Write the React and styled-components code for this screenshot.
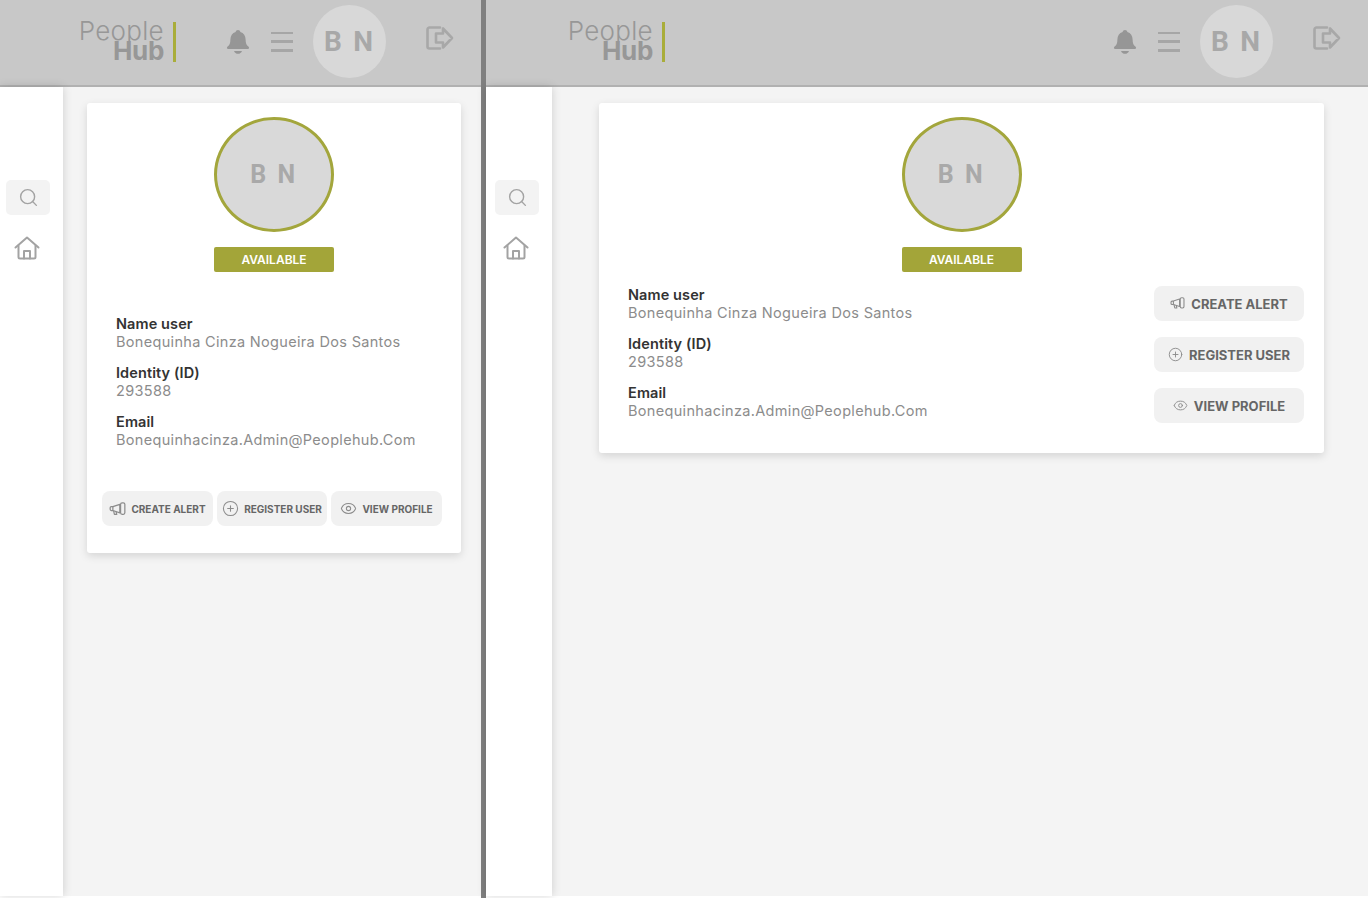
import React from "react";
import styled, { createGlobalStyle } from "styled-components";
import { Search, CirclePlus, Eye } from "lucide-react";

const Global = createGlobalStyle`
  html, body { margin: 0; padding: 0; background: #fff; height: 100%; overflow: hidden; }
  * { box-sizing: border-box; }
  body { font-family: Inter, "Liberation Sans", sans-serif; }
`;

const Page = styled.div`display: flex; width: 1368px; height: 898px; background: #fff;`;
const Divider = styled.div`width: 5px; height: 898px; background: #808080; flex: none;`;
const Pane = styled.div`
  width: ${p => p.$w}px; height: 896px; flex: none; display: flex; flex-direction: column;
`;
const Header = styled.header`
  height: 87px; flex: none; display: flex; align-items: center; background: #c8c8c8;
  border-bottom: 2px solid #b1b1b1; padding: 0 28px 2px ${p => p.$logo}px; justify-content: space-between;
`;
const Logo = styled.div`display: flex; align-items: stretch; gap: 9px; height: 40px; margin-top: 0;`;
const LogoText = styled.div`
  display: flex; flex-direction: column; align-items: flex-end; color: #979797;
  font-size: 26px; line-height: 20px; width: 91px;
`;
const LogoLight = styled.span`font-weight: 300; letter-spacing: .3px; white-space: nowrap; margin-top: -1px;`;
const LogoBold = styled.span`font-weight: 700; letter-spacing: -.3px;`;
const LogoBar = styled.span`width: 3px; background: #a9ad3a;`;
const Actions = styled.div`display: flex; align-items: center; width: 227px;`;
const Bell = styled.svg`width: 24px; height: 26px; fill: #969696; margin-right: 21px; flex: none;`;
const Burger = styled.div`
  width: 22px; height: 20px; flex: none; margin-right: 20px; display: flex; flex-direction: column; justify-content: space-between;
  span { height: 2.5px; background: #a6a6a6; display: block; }
`;
const HeadAvatar = styled.div`
  width: 73px; height: 73px; border-radius: 50%; background: #d8d8d8; color: #a8a8a8; flex: none;
  display: flex; align-items: center; justify-content: center;
  font: 700 28px Roboto, sans-serif; letter-spacing: 2.2px;
`;
const Logout = styled.svg`
  width: 30px; height: 26px; margin-left: 39px; flex: none; fill: none; stroke: #a8a8a8; stroke-width: 2.6;
  stroke-linecap: round; stroke-linejoin: round; margin-top: -7px;
`;
const Body = styled.div`flex: 1; display: flex; min-height: 0;`;
const Side = styled.aside`
  width: ${p => p.$w}px; flex: none; background: #fff; position: relative; z-index: 1;
  box-shadow: 0 0 9px rgba(0,0,0,.16); display: flex; flex-direction: column; padding: 93px 0 0 ${p => p.$x}px;
`;
const SearchBox = styled.div`
  width: 44px; height: 35px; border-radius: 5px; background: #f3f3f3; color: #a3a3a3;
  display: flex; align-items: center; justify-content: center;
`;
const HomeIcon = styled.svg`
  width: 26px; height: 24px; margin: 21px 0 0 ${p => p.$x}px; fill: none; stroke: #a3a3a3; stroke-width: 2;
  stroke-linejoin: round; stroke-linecap: round;
`;
const Main = styled.main`
  flex: 1; background: #f4f4f4; padding: 16px ${p => p.$r}px 0 ${p => p.$l}px;
`;
const Card = styled.section`
  background: #fff; border-radius: 3px; box-shadow: 0 3px 8px rgba(0,0,0,.13); height: ${p => p.$h}px;
  padding-top: 14px; display: flex; flex-direction: column;
`;
const Ring = styled.div`
  width: 120px; height: 115px; border-radius: 50%; border: 3px solid #a3a63c; background: #d9d9d9; align-self: center;
  display: flex; align-items: center; justify-content: center; color: #a9a9a9; flex: none;
  font: 700 25px Roboto, sans-serif; letter-spacing: 2.6px;
`;
const Badge = styled.div`
  width: 120px; height: 25px; margin-top: 15px; align-self: center; background: #a3a539; border-radius: 2px; color: #fff; flex: none;
  display: flex; align-items: center; justify-content: center; font-size: 12px; font-weight: 600;
`;
const Info = styled.div`display: flex; flex-direction: column; gap: 13px;`;
const Field = styled.div`display: flex; flex-direction: column;`;
const Label = styled.div`font-size: 14.5px; line-height: 18px; font-weight: 600; color: #333; letter-spacing: .1px;`;
const Value = styled.div`font-size: 14.5px; line-height: 18px; color: #8c8c8c; letter-spacing: .32px; white-space: nowrap;`;
const StackedInfo = styled(Info)`margin: 43px 0 0 29px;`;
const ButtonRow = styled.div`display: flex; gap: 4px; margin: 42px 0 0 15px;`;
const WideRow = styled.div`display: flex; justify-content: space-between; padding: 14px 20px 0 29px;`;
const ButtonCol = styled.div`display: flex; flex-direction: column; gap: 16px; margin-top: 0;`;
const WideInfo = styled(Info)`margin-top: 0;`;
const Btn = styled.button`
  width: ${p => p.$w}px; height: 35px; border: 0; border-radius: 8px; background: #f1f1f1; color: #666;
  font-family: inherit; font-weight: 700; font-size: ${p => p.$fs}px; white-space: nowrap; padding: 0;
  display: flex; align-items: center; justify-content: center; gap: ${p => p.$gap}px;
  svg { flex: none; color: #8c8c8c; }
`;

const BellIcon = () => (
  <Bell viewBox="0 0 24 26">
    <path d="M12 1c1.3 0 2.2.8 2.4 2 3.3 1 5.2 3.9 5.2 7.5 0 3.8.8 5.7 3 7.2.9.7.5 2.3-.8 2.3H2.2c-1.3 0-1.700-1.600-.8-2.300 2.200-1.500 3-3.400 3-7.200 0-3.600 1.900-6.500 5.200-7.500.2-1.200 1.100-2 2.400-2z" />
    <path d="M8 22h8c-.6 1.900-2.200 2.800-4 2.800S8.600 23.900 8 22z" />
  </Bell>
);

const LogoutIcon = () => (
  <Logout viewBox="0 0 30 26">
    <path d="M15 2.500H4.500a2 2 0 0 0-2 2v17a2 2 0 0 0 2 2H15" />
    <path d="M15 8.500h-4v9h7v5l9-9.500-9-9.500v5z" />
  </Logout>
);

const Megaphone = ({ s }) => (
  <svg width={s} height={s * 0.82} viewBox="0 0 22 18" fill="none" stroke="currentColor" strokeWidth="1.600" strokeLinejoin="round">
    <path d="M14 3 5 6H3a1.500 1.500 0 0 0-1.500 1.500v2A1.500 1.500 0 0 0 3 11h2l9 3z" />
    <path d="M5 6v5M6 11.400 7 16h3l-.8-3.500" />
    <rect x="15" y="1" width="5.500" height="15" rx="2" />
  </svg>
);

const Top = () => (
  <>
    <Ring>B N</Ring>
    <Badge>AVAILABLE</Badge>
  </>
);

const Fields = () => (
  <>
    <Field><Label>Name user</Label><Value>Bonequinha Cinza Nogueira Dos Santos</Value></Field>
    <Field><Label>Identity (ID)</Label><Value>293588</Value></Field>
    <Field><Label>Email</Label><Value>Bonequinhacinza.Admin@Peoplehub.Com</Value></Field>
  </>
);

const Shell = ({ w, logo, sideW, sideX, homeX, l, r, children }) => (
  <Pane $w={w}>
    <Header $logo={logo}>
      <Logo>
        <LogoText><LogoLight>People</LogoLight><LogoBold>Hub</LogoBold></LogoText>
        <LogoBar />
      </Logo>
      <Actions>
        <BellIcon />
        <Burger><span /><span /><span /></Burger>
        <HeadAvatar>B N</HeadAvatar>
        <LogoutIcon />
      </Actions>
    </Header>
    <Body>
      <Side $w={sideW} $x={sideX}>
        <SearchBox><Search size={21} strokeWidth={1.6} /></SearchBox>
        <HomeIcon $x={homeX} viewBox="0 0 26 24">
          <path d="M1.500 11.500 13 1.500l11.500 10" />
          <path d="M4.500 9.500V21a1.500 1.500 0 0 0 1.500 1.500h14a1.500 1.500 0 0 0 1.500-1.500V9.500" />
          <path d="M10 22.500V15h6v7.500" />
        </HomeIcon>
      </Side>
      <Main $l={l} $r={r}>{children}</Main>
    </Body>
  </Pane>
);

export default function App() {
  return (
    <Page>
      <Global />
      <Shell w={481} logo={73} sideW={63} sideX={6} homeX={8} l={24} r={20}>
        <Card $h={450}>
          <Top />
          <StackedInfo><Fields /></StackedInfo>
          <ButtonRow>
            <Btn $w={111} $fs={10} $gap={5}><Megaphone s={17} />CREATE ALERT</Btn>
            <Btn $w={110} $fs={10} $gap={5}><CirclePlus size={17} strokeWidth={1.5} />REGISTER USER</Btn>
            <Btn $w={111} $fs={10} $gap={5}><Eye size={17} strokeWidth={1.5} />VIEW PROFILE</Btn>
          </ButtonRow>
        </Card>
      </Shell>
      <Divider />
      <Shell w={882} logo={76} sideW={66} sideX={9} homeX={8} l={47} r={44}>
        <Card $h={350}>
          <Top />
          <WideRow>
            <WideInfo><Fields /></WideInfo>
            <ButtonCol>
              <Btn $w={150} $fs={13} $gap={6}><Megaphone s={15} />CREATE ALERT</Btn>
              <Btn $w={150} $fs={13} $gap={6}><CirclePlus size={15} strokeWidth={1.5} />REGISTER USER</Btn>
              <Btn $w={150} $fs={13} $gap={6}><Eye size={15} strokeWidth={1.5} />VIEW PROFILE</Btn>
            </ButtonCol>
          </WideRow>
        </Card>
      </Shell>
    </Page>
  );
}
